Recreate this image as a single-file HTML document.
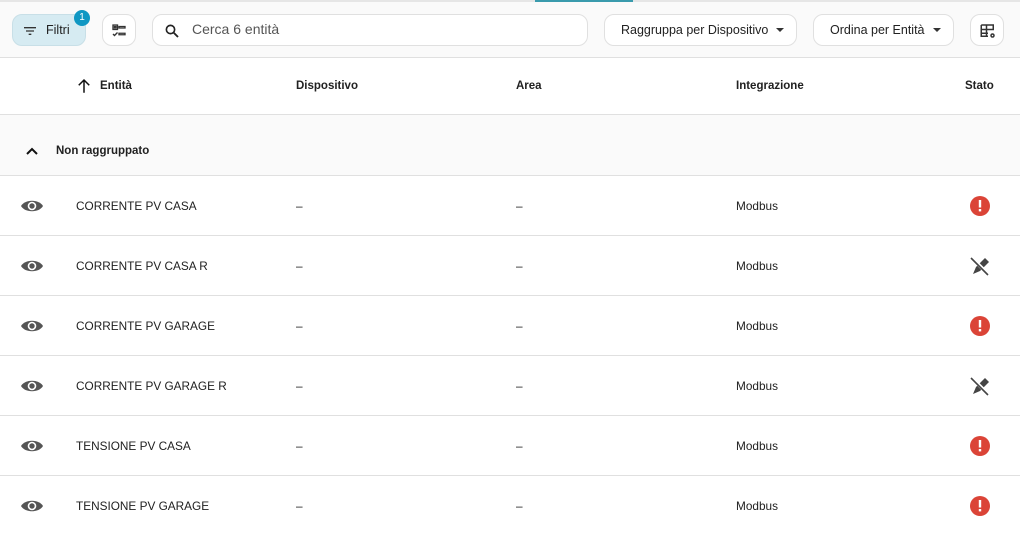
<!DOCTYPE html>
<html><head><meta charset="utf-8"><style>
*{box-sizing:border-box;margin:0;padding:0}
body{width:1020px;height:556px;overflow:hidden;background:#fff;font-family:"Liberation Sans",sans-serif;color:#212121;position:relative}
.top{position:absolute;left:0;top:0;width:1020px;height:58px;background:#fafafa;border-top:2px solid #e6e6e6;border-bottom:1px solid #e0e0e0}
.teal{position:absolute;left:535px;top:0;width:98px;height:2px;background:#3a9bad}
.btn{position:absolute;top:14px;height:32px;border:1px solid #e0e0e0;border-radius:10px;background:#fff;font-size:12px;display:flex;align-items:center}
.abs{position:absolute}
.hdr{position:absolute;top:58px;left:0;width:1020px;height:57px;border-bottom:1px solid #e0e0e0;font-size:11.5px;font-weight:bold}
.hdr span{position:absolute;top:22px}
.grp{position:absolute;top:115px;left:0;width:1020px;height:61px;background:#fafafa;border-bottom:1px solid #e0e0e0}
.row{position:absolute;left:0;width:1020px;height:60px;border-bottom:1px solid #e0e0e0;font-size:11.8px}
.row span{position:absolute;top:23px}
.ico{position:absolute}
</style></head><body>
<div class="top"></div><div class="teal"></div>
<div class="btn" style="left:12px;width:74px;background:#d6ebf2;border-color:#c8dfe7">
<svg class="ico" style="left:9px;top:8px" width="16" height="16" viewBox="0 0 24 24"><path d="M3 6h18v2H3zM6 11h12v2H6zM10 16h4v2h-4z" fill="#333"/></svg>
<span class="abs" style="left:33px;top:8px;font-size:12.5px">Filtri</span></div>
<div class="abs" style="left:74px;top:10px;width:16px;height:16px;border-radius:50%;background:#0f97c3;color:#fff;font-size:10px;text-align:center;line-height:16px">1</div>
<div class="btn" style="left:102px;width:34px">
<svg class="ico" style="left:7px;top:7px" width="18" height="18" viewBox="0 0 24 24"><path d="M4 4h6v6H4zM6 6v2h2V6zM12 6h8v2h-8zM12 15h8v2h-8zM4 16l2 2 4-4" fill="none" stroke="#333" stroke-width="1.8"/></svg></div>
<div class="btn" style="left:152px;width:436px">
<svg class="ico" style="left:10px;top:7px" width="18" height="18" viewBox="0 0 24 24"><circle cx="10" cy="10" r="5.5" fill="none" stroke="#222" stroke-width="2.2"/><path d="M14 14l6 6" stroke="#222" stroke-width="2.5"/></svg>
<span class="abs" style="left:39px;top:6px;font-size:14px;color:#555">Cerca 6 entità</span></div>
<div class="btn" style="left:604px;width:193px"><span class="abs" style="left:16px;top:8px;font-size:12.5px">Raggruppa per Dispositivo</span>
<svg class="ico" style="left:171px;top:13px" width="8" height="5"><path d="M0 0h8L4 4z" fill="#333"/></svg></div>
<div class="btn" style="left:813px;width:141px"><span class="abs" style="left:16px;top:8px;font-size:12.5px">Ordina per Entità</span>
<svg class="ico" style="left:119px;top:13px" width="8" height="5"><path d="M0 0h8L4 4z" fill="#333"/></svg></div>
<div class="btn" style="left:970px;width:34px">
<svg class="ico" style="left:8px;top:7px" width="18" height="18" viewBox="0 0 24 24"><path d="M3 4h16v7M3 4v15h9M3 10h16M3 15h9M10 4v15" fill="none" stroke="#333" stroke-width="2"/><circle cx="18" cy="18" r="3" fill="#333"/><circle cx="18" cy="18" r="1" fill="#fff"/></svg></div>

<div class="hdr">
<svg class="ico" style="left:75px;top:19px" width="18" height="18" viewBox="0 0 24 24"><path d="M12 21V4M5 11l7-7 7 7" fill="none" stroke="#111" stroke-width="2"/></svg>
<span style="left:100px">Entità</span><span style="left:296px">Dispositivo</span><span style="left:516px">Area</span><span style="left:736px">Integrazione</span><span style="left:965px">Stato</span></div>
<div class="grp">
<svg class="ico" style="left:25px;top:32px" width="14" height="9" viewBox="0 0 14 9"><path d="M2 7l5-5 5 5" fill="none" stroke="#111" stroke-width="2"/></svg>
<span class="abs" style="left:56px;top:30px;font-size:11.5px;font-weight:bold">Non raggruppato</span></div>

<div class="row" style="top:176px"><span style="left:76px">CORRENTE PV CASA</span><span style="left:296px">–</span><span style="left:516px">–</span><span style="left:736px">Modbus</span></div>
<div class="row" style="top:236px"><span style="left:76px">CORRENTE PV CASA R</span><span style="left:296px">–</span><span style="left:516px">–</span><span style="left:736px">Modbus</span></div>
<div class="row" style="top:296px"><span style="left:76px">CORRENTE PV GARAGE</span><span style="left:296px">–</span><span style="left:516px">–</span><span style="left:736px">Modbus</span></div>
<div class="row" style="top:356px"><span style="left:76px">CORRENTE PV GARAGE R</span><span style="left:296px">–</span><span style="left:516px">–</span><span style="left:736px">Modbus</span></div>
<div class="row" style="top:416px"><span style="left:76px">TENSIONE PV CASA</span><span style="left:296px">–</span><span style="left:516px">–</span><span style="left:736px">Modbus</span></div>
<div class="row" style="top:476px;border-bottom:none"><span style="left:76px">TENSIONE PV GARAGE</span><span style="left:296px">–</span><span style="left:516px">–</span><span style="left:736px">Modbus</span></div>

<svg class="ico" style="left:0;top:0" width="1020" height="556">
<defs>
<g id="eye"><path d="M-11 0C-7-7 7-7 11 0C7 7-7 7-11 0z" fill="#555"/><circle r="4.3" fill="#fff"/><circle r="2.7" fill="#555"/></g>
<g id="err"><circle r="10" fill="#db4437"/><rect x="-1.2" y="-6" width="2.4" height="7.5" fill="#fff"/><rect x="-1.2" y="3" width="2.4" height="2.4" fill="#fff"/></g>
<g id="pen"><path d="M-7 8l3-7 9-9 4 4-9 9z" fill="#444"/><path d="M-9-9L9 9" stroke="#fff" stroke-width="3.5"/><path d="M-9-8L8 9" stroke="#444" stroke-width="1.6"/></g>
</defs>
<use href="#eye" x="32" y="206"/><use href="#eye" x="32" y="266"/><use href="#eye" x="32" y="326"/><use href="#eye" x="32" y="386"/><use href="#eye" x="32" y="446"/><use href="#eye" x="32" y="506"/>
<use href="#err" x="980" y="206"/><use href="#pen" x="980" y="266"/><use href="#err" x="980" y="326"/><use href="#pen" x="980" y="386"/><use href="#err" x="980" y="446"/><use href="#err" x="980" y="506"/>
</svg>
</body></html>
